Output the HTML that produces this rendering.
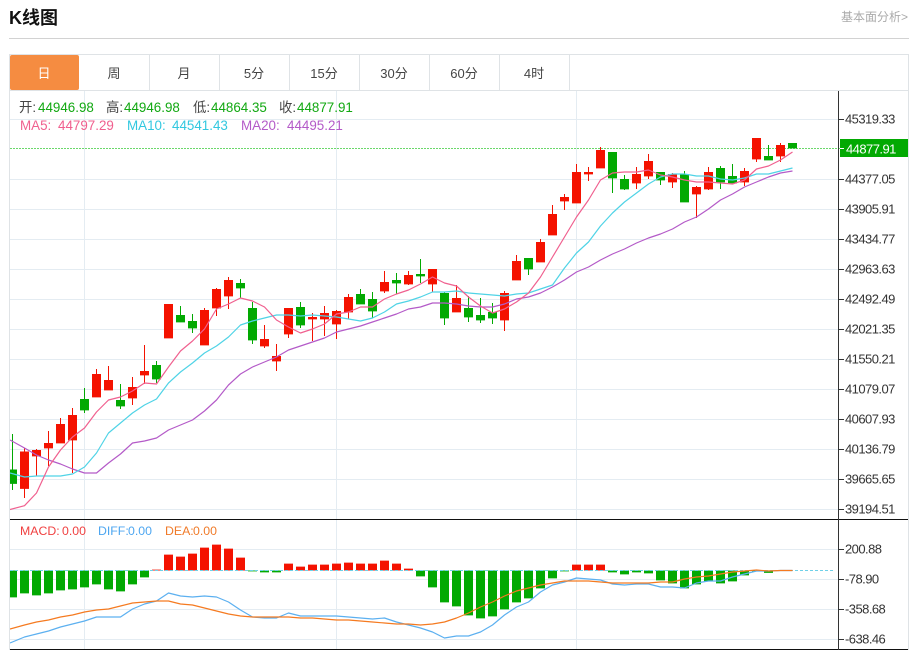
<!DOCTYPE html>
<html><head><meta charset="utf-8"><title>K线图</title>
<style>
html,body{margin:0;padding:0;background:#fff;width:912px;height:650px;overflow:hidden}
svg{display:block}
text{font-family:"Liberation Sans","Noto Sans CJK SC",sans-serif}
.ax text{font-size:13px;letter-spacing:-.55px;fill:#333}
.tab text{font-size:13px;fill:#444;text-anchor:middle}
.v{fill:#12a812}.k{fill:#444}
.ln{fill:none;stroke-width:1.2;stroke-linejoin:round}
</style></head><body>
<svg width="912" height="650" viewBox="0 0 912 650" xmlns="http://www.w3.org/2000/svg">
<defs><clipPath id="c"><rect x="10" y="91" width="828" height="559"/></clipPath></defs>
<text x="9" y="24" font-size="18" font-weight="700" fill="#111">K线图</text>
<text x="841" y="21" font-size="12" fill="#aaa">基本面分析&gt;</text>
<path d="M9 38.5H909" stroke="#d2d2d2" fill="none"/>
<path d="M10 54.5H908.5V650M10 90.5H908.5M9.5 54V650M149.5 54V90M219.5 54V90M289.5 54V90M359.5 54V90M429.5 54V90M499.5 54V90M569.5 54V90" stroke="#dfe3e6" fill="none"/>
<rect x="10" y="55" width="69" height="35" rx="2" fill="#f58c41"/>
<g class="tab"><text x="44" y="78" style="fill:#fff">日</text><text x="114" y="78">周</text><text x="184" y="78">月</text><text x="254" y="78">5分</text><text x="324" y="78">15分</text><text x="394" y="78">30分</text><text x="464" y="78">60分</text><text x="534" y="78">4时</text></g>
<path d="M10 119.5H838M10 179.5H838M10 209.5H838M10 239.5H838M10 269.5H838M10 299.5H838M10 329.5H838M10 359.5H838M10 389.5H838M10 419.5H838M10 449.5H838M10 479.5H838M10 509.5H838M10 549.5H838M10 579.5H838M10 609.5H838M10 639.5H838M84.5 91V650M336.5 91V650M576.5 91V650" stroke="#e4ecf2" fill="none"/>
<path d="M10 148.5H840" stroke="#6bd86b" stroke-dasharray="2 1" fill="none"/>
<g clip-path="url(#c)">
<path fill="none" stroke="#f41200" d="M24.5 448V498M36.5 449V476M48.5 431V466M60.5 418V443M72.5 408V473M96.5 369V397M108.5 366V390M132.5 377V405M144.5 345V384M168.5 304V338M204.5 308V345M216.5 288V316M228.5 277V309M264.5 325V348M276.5 344V371M288.5 308V338M312.5 313V341M324.5 306V336M336.5 310V339M348.5 294V319M384.5 271V293M408.5 271V285M432.5 269V292M456.5 285V312M504.5 291V331M516.5 255V280M540.5 239V262M552.5 205V235M564.5 194V210M576.5 164V203M588.5 167V181M600.5 147V168M636.5 167V189M648.5 154V179M672.5 173V188M696.5 186V218M708.5 167V190M744.5 168V186M756.5 138V162M780.5 143V162"/>
<path fill="none" stroke="#02a902" d="M12.5 434V490M84.5 388V413M120.5 384V409M156.5 361V383M180.5 306V322M192.5 314V333M240.5 279V298M252.5 302V344M300.5 302V328M360.5 289V304M372.5 292V318M396.5 273V294M420.5 259V283M444.5 292V325M468.5 296V322M480.5 298V323M492.5 303V324M528.5 258V275M612.5 152V193M624.5 175V190M660.5 172V185M684.5 171V202M720.5 166V189M732.5 164V183M768.5 145V160M792.5 143V148"/>
<path id="rb" fill="#f41200" d="M20 451.5h9v37h-9zM32 450h9v6h-9zM44 443h9v5h-9zM56 424h9v19h-9zM68 415h9v25h-9zM92 374h9v23h-9zM104 380h9v10h-9zM128 387h9v11h-9zM140 371h9v4h-9zM164 304h9v34h-9zM200 310h9v35h-9zM212 289h9v19h-9zM224 280h9v16h-9zM260 339h9v7h-9zM272 356h9v5h-9zM284 308h9v26h-9zM308 317h9v2h-9zM320 313h9v6h-9zM332 311h9v13h-9zM344 297h9v15h-9zM380 282h9v9h-9zM404 275h9v9h-9zM428 269h9v15h-9zM452 298h9v14h-9zM500 293h9v27h-9zM512 261h9v19h-9zM536 242h9v20h-9zM548 214h9v21h-9zM560 197h9v4h-9zM572 172h9v31h-9zM584 172h9v2h-9zM596 150h9v18h-9zM632 174h9v9h-9zM644 161h9v15h-9zM668 174h9v8h-9zM692 187h9v7h-9zM704 172h9v17h-9zM740 171h9v11h-9zM752 138h9v21h-9zM776 145h9v11h-9z"/>
<use href="#rb" transform="translate(0,.4)"/>
<path id="gb" fill="#02a902" d="M8 469.5h9v14h-9zM80 399h9v11h-9zM116 400h9v6h-9zM152 365h9v14h-9zM176 315h9v7h-9zM188 321h9v7h-9zM236 283h9v5h-9zM248 308h9v32h-9zM296 307h9v18h-9zM356 294h9v10h-9zM368 299h9v12h-9zM392 280h9v3h-9zM416 274h9v2h-9zM440 293h9v25h-9zM464 308h9v9h-9zM476 315h9v5h-9zM488 312h9v6h-9zM524 258h9v11h-9zM608 152h9v26h-9zM620 179h9v10h-9zM656 172h9v8h-9zM680 174h9v28h-9zM716 168h9v14h-9zM728 176h9v7h-9zM764 156h9v4h-9zM788 143h9v5h-9z"/>
<use href="#gb" transform="translate(0,.4)"/>
<polyline class="ln" stroke="#b45ac8" points="10,440 24.5,448 36.5,455 48.5,460 60.5,464 72.5,469 84.5,473 96.5,473 108.5,463 120.5,454 132.5,443 144.5,441 156.5,438 168.5,430 180.5,425 192.5,420 204.5,411 216.5,400 228.5,385 240.5,374 252.5,367 264.5,362 276.5,357 288.5,350 300.5,346 312.5,342 324.5,338 336.5,332 348.5,329 360.5,326 372.5,322 384.5,318 396.5,314 408.5,309 420.5,307 432.5,303 444.5,303 456.5,304 468.5,306 480.5,307 492.5,307 504.5,304 516.5,299 528.5,297 540.5,293 552.5,287 564.5,280 576.5,272 588.5,267 600.5,260 612.5,254 624.5,249 636.5,243 648.5,238 660.5,234 672.5,229 684.5,222 696.5,217 708.5,209 720.5,200 732.5,194 744.5,187 756.5,182 768.5,177 780.5,173 792.5,171"/>
<polyline class="ln" stroke="#4fd3e6" points="10,473 24.5,477 36.5,476 48.5,476 60.5,476 72.5,474 84.5,467 96.5,453 108.5,433 120.5,423 132.5,413 144.5,405 156.5,399 168.5,383 180.5,372 192.5,363 204.5,353 216.5,346 228.5,337 240.5,325 252.5,321 264.5,318 276.5,315 288.5,315 300.5,316 312.5,315 324.5,316 336.5,317 348.5,319 360.5,321 372.5,318 384.5,312 396.5,304 408.5,301 420.5,297 432.5,292 444.5,292 456.5,291 468.5,293 480.5,294 492.5,295 504.5,296 516.5,294 528.5,293 540.5,289 552.5,285 564.5,268 576.5,253 588.5,242 600.5,226 612.5,213 624.5,202 636.5,193 648.5,184 660.5,177 672.5,174 684.5,174 696.5,176 708.5,176 720.5,179 732.5,180 744.5,178 756.5,174 768.5,174 780.5,171 792.5,168"/>
<polyline class="ln" stroke="#f0608f" points="10,509.5 24.5,505.7 36.5,493 48.5,467 60.5,450 72.5,437 84.5,428 96.5,412 108.5,400 120.5,397 132.5,391 144.5,383 156.5,384 168.5,367 180.5,351 192.5,341 204.5,329 216.5,309 228.5,304 240.5,298 252.5,301 264.5,307 276.5,320 288.5,327 300.5,333 312.5,329 324.5,324 336.5,314 348.5,312 360.5,307 372.5,307 384.5,299 396.5,294 408.5,290 420.5,284 432.5,277 444.5,283 456.5,286 468.5,297 480.5,306 492.5,313 504.5,309 516.5,302 528.5,293 540.5,277 552.5,257 564.5,237 576.5,217 588.5,200 600.5,180 612.5,173 624.5,172 636.5,172 648.5,170 660.5,175 672.5,177 684.5,180 696.5,182 708.5,182 720.5,183 732.5,184 744.5,180 756.5,169 768.5,166 780.5,160 792.5,152"/>
<path id="gm" fill="#02a902" d="M8 570.5h9V597h-9zM20 570.5h9V593h-9zM32 570.5h9V595h-9zM44 570.5h9V593h-9zM56 570.5h9V590h-9zM68 570.5h9V589h-9zM80 570.5h9V587h-9zM92 570.5h9V584h-9zM104 570.5h9V589h-9zM116 570.5h9V591h-9zM128 570.5h9V584h-9zM140 570.5h9V577h-9zM248 570.5h9V571h-9zM260 570.5h9V572h-9zM272 570.5h9V572h-9zM416 570.5h9V576h-9zM428 570.5h9V587h-9zM440 570.5h9V602h-9zM452 570.5h9V606h-9zM464 570.5h9V615h-9zM476 570.5h9V618h-9zM488 570.5h9V616h-9zM500 570.5h9V609h-9zM512 570.5h9V602h-9zM524 570.5h9V598h-9zM536 570.5h9V588h-9zM548 570.5h9V578h-9zM560 570.5h9V571h-9zM608 570.5h9V572h-9zM620 570.5h9V574h-9zM632 570.5h9V572h-9zM644 570.5h9V573h-9zM656 570.5h9V580h-9zM668 570.5h9V583h-9zM680 570.5h9V588h-9zM692 570.5h9V584h-9zM704 570.5h9V581h-9zM716 570.5h9V583h-9zM728 570.5h9V581h-9zM740 570.5h9V575h-9zM752 570.5h9V571h-9zM764 570.5h9V572.5h-9z"/>
<use href="#gm" transform="translate(0,.4)"/>
<path id="rm" fill="#f41200" d="M152 570.5h9V570h-9zM164 570.5h9V555h-9zM176 570.5h9V557h-9zM188 570.5h9V554h-9zM200 570.5h9V548h-9zM212 570.5h9V545h-9zM224 570.5h9V549h-9zM236 570.5h9V558h-9zM284 570.5h9V564h-9zM296 570.5h9V567h-9zM308 570.5h9V565h-9zM320 570.5h9V565h-9zM332 570.5h9V564h-9zM344 570.5h9V563h-9zM356 570.5h9V564h-9zM368 570.5h9V564h-9zM380 570.5h9V561h-9zM392 570.5h9V564h-9zM404 570.5h9V569h-9zM572 570.5h9V565h-9zM584 570.5h9V565h-9zM596 570.5h9V565h-9z"/>
<use href="#rm" transform="translate(0,-.4)"/>
<path d="M10 570.5H835" stroke="#6fd0e8" stroke-dasharray="3 2" fill="none"/>
<polyline class="ln" stroke="#5cb0f0" points="10,643 24.5,637 36.5,634 48.5,631 60.5,627 72.5,624 84.5,621 96.5,617 108.5,617 120.5,617 132.5,609 144.5,604 156.5,601 168.5,593 180.5,596 192.5,597 204.5,596 216.5,597 228.5,602 240.5,610 252.5,617 264.5,618 276.5,618 288.5,613 300.5,616 312.5,616 324.5,616 336.5,616 348.5,617 360.5,618 372.5,619 384.5,618 396.5,622 408.5,625 420.5,628 432.5,632 444.5,638 456.5,636 468.5,636 480.5,632 492.5,625 504.5,615 516.5,607 528.5,602 540.5,592 552.5,585 564.5,582 576.5,578 588.5,579 600.5,580 612.5,584 624.5,585 636.5,584 648.5,584 660.5,587 672.5,587 684.5,588 696.5,583 708.5,581 720.5,581 732.5,577 744.5,574 756.5,571 768.5,571 780.5,570.5 792.5,570.5"/>
<polyline class="ln" stroke="#f57a20" points="10,629 24.5,625 36.5,622 48.5,620 60.5,617 72.5,615 84.5,612 96.5,610 108.5,609 120.5,606 132.5,603 144.5,602 156.5,601 168.5,601 180.5,604 192.5,605 204.5,608 216.5,611 228.5,614 240.5,616 252.5,617 264.5,617 276.5,617 288.5,617 300.5,618 312.5,618 324.5,619 336.5,620 348.5,620 360.5,621 372.5,622 384.5,623 396.5,624 408.5,624 420.5,625 432.5,624 444.5,622 456.5,618 468.5,613 480.5,607 492.5,602 504.5,596 516.5,591 528.5,588 540.5,585 552.5,583 564.5,581 576.5,581 588.5,581 600.5,582 612.5,583 624.5,583 636.5,583 648.5,583 660.5,582 672.5,582 684.5,579 696.5,577 708.5,576 720.5,574 732.5,572 744.5,571 756.5,570 768.5,571 780.5,570.5 792.5,570.5"/>
</g>
<path d="M10 519.5H908M10 649.5H908" stroke="#111" fill="none"/>
<path d="M838.5 91V650" stroke="#333" fill="none"/>
<path d="M839 119.5H844M839 179.5H844M839 209.5H844M839 239.5H844M839 269.5H844M839 299.5H844M839 329.5H844M839 359.5H844M839 389.5H844M839 419.5H844M839 449.5H844M839 479.5H844M839 509.5H844M839 549.5H844M839 579.5H844M839 609.5H844M839 639.5H844" stroke="#333" fill="none"/>
<rect x="840" y="139" width="68" height="18" fill="#02a902"/>
<path d="M840 148.5H844" stroke="#fff" fill="none"/>
<g class="ax">
<text x="845" y="123.5">45319.33</text>
<text x="846" y="153.5" style="fill:#fff">44877.91</text>
<text x="845" y="183.5">44377.05</text>
<text x="845" y="213.5">43905.91</text>
<text x="845" y="243.5">43434.77</text>
<text x="845" y="273.5">42963.63</text>
<text x="845" y="303.5">42492.49</text>
<text x="845" y="333.5">42021.35</text>
<text x="845" y="363.5">41550.21</text>
<text x="845" y="393.5">41079.07</text>
<text x="845" y="423.5">40607.93</text>
<text x="845" y="453.5">40136.79</text>
<text x="845" y="483.5">39665.65</text>
<text x="845" y="513.5">39194.51</text>
<text x="845" y="553.5">200.88</text>
<text x="845" y="583.5">-78.90</text>
<text x="845" y="613.5">-358.68</text>
<text x="845" y="643.5">-638.46</text>
</g>
<g font-size="13.4">
<text x="19" y="112" class="k">开:</text><text x="38" y="112" class="v">44946.98</text>
<text x="106" y="112" class="k">高:</text><text x="124" y="112" class="v">44946.98</text>
<text x="193" y="112" class="k">低:</text><text x="211" y="112" class="v">44864.35</text>
<text x="279" y="112" class="k">收:</text><text x="297" y="112" class="v">44877.91</text>
<text x="20" y="130" fill="#f0608f">MA5:</text><text x="58" y="130" fill="#f0608f">44797.29</text>
<text x="127" y="130" fill="#32c8e0">MA10:</text><text x="172" y="130" fill="#32c8e0">44541.43</text>
<text x="241" y="130" fill="#b45ac8">MA20:</text><text x="287" y="130" fill="#b45ac8">44495.21</text>
</g>
<g font-size="12.3">
<text x="20" y="535" fill="#f04040">MACD:</text><text x="62" y="535" fill="#f04040">0.00</text>
<text x="98" y="535" fill="#4da6f0">DIFF:</text><text x="128" y="535" fill="#4da6f0">0.00</text>
<text x="165" y="535" fill="#f07a28">DEA:</text><text x="193" y="535" fill="#f07a28">0.00</text>
</g>
</svg>
</body></html>
